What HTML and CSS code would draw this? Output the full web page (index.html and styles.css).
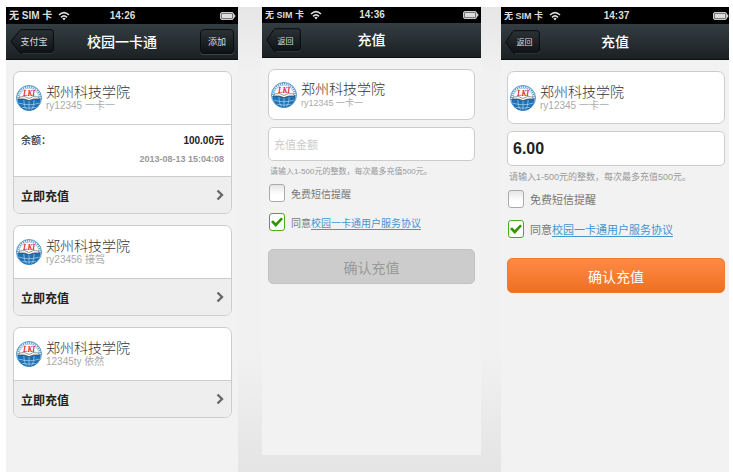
FILE: index.html
```html
<!DOCTYPE html>
<html lang="zh-CN">
<head>
<meta charset="utf-8">
<meta name="viewport" content="width=device-width, initial-scale=1">
<title>校园一卡通</title>
<link rel="stylesheet" href="styles.css">
</head>
<body>
<svg class="sprite" aria-hidden="true">
  <defs>
    <linearGradient id="key" x1="0" y1="0" x2="0" y2="1">
      <stop offset="0" stop-color="#2b3235"/>
      <stop offset="1" stop-color="#0e1214"/>
    </linearGradient>
    <symbol id="wifi" viewBox="0 0 12 10">
      <path d="M1 4Q6-.8 11 4M3 6.3Q6 3.6 9 6.3" fill="none" stroke="#ddd" stroke-width="1.6"/>
      <path d="M4.3 7.5Q6 6.2 7.7 7.5L6 9.4Z" fill="#ddd"/>
    </symbol>
    <symbol id="battery" viewBox="0 0 16 8">
      <rect x=".5" y=".5" width="13" height="7" rx="1.5" fill="#777" stroke="#ccc"/>
      <rect x="2" y="2" width="10" height="4" fill="#ddd"/>
      <path d="M14 2.5h1q1 1.5 0 3h-1z" fill="#ccc"/>
    </symbol>
    <symbol id="back" viewBox="0 0 44 25">
      <path d="M12 .7H41Q43.3.7 43.3 3V22Q43.3 24.3 41 24.3H12Q10.500 24.300 9.500 23L.8 12.500 9.500 2Q10.500.7 12 .7Z" fill="url(#key)" stroke="#080b0c" stroke-width="1"/>
      <path d="M12 24.500H41Q43.500 24.500 43.500 22" fill="none" stroke="#465056" stroke-width=".6"/>
    </symbol>
    <symbol id="back-short" viewBox="0 0 35 24">
      <path d="M10 .7H32Q34.300.7 34.300 3V21Q34.300 23.300 32 23.300H10Q8.500 23.300 7.500 22L.8 12 7.500 2Q8.500.7 10 .7Z" fill="url(#key)" stroke="#080b0c" stroke-width="1"/>
      <path d="M10 23.500H32Q34.500 23.500 34.500 21" fill="none" stroke="#465056" stroke-width=".6"/>
    </symbol>
    <symbol id="chevron" viewBox="0 0 8 12">
      <path d="M1.500 1.500L6 6 1.500 10.500" fill="none" stroke="#666" stroke-width="2.300"/>
    </symbol>
    <symbol id="crest" viewBox="0 0 50 50">
      <circle cx="25" cy="25" r="24" fill="#f4f9fd" stroke="#2c7cb9" stroke-width="1.600"/>
      <circle cx="25" cy="25" r="21.500" fill="none" stroke="#5a9bcd" stroke-width="3" stroke-dasharray="2.200 2"/>
      <circle cx="25" cy="25" r="19" fill="#fff" stroke="#5a9bcd" stroke-width="1"/>
      <path d="M3 27Q14 23 25 29 36 23 47 27A22 22 0 0 1 3 27Z" fill="#1d71b4"/>
      <path d="M25 31V48M15 29Q15 41 20 47M35 29Q35 41 30 47M6 35Q25 41 44 35M12 43Q25 46 38 43" fill="none" stroke="#b6d8ef" stroke-width="1.300"/>
      <path d="M7 23Q17 20 25 26 33 20 43 23L45 27Q33 25 25 30 17 25 5 27Z" fill="#fff" stroke="#333" stroke-width="1"/>
      <text x="25" y="21" text-anchor="middle" class="crest-letters">LKI</text>
    </symbol>
  </defs>
</svg>

<main class="board">
  <section class="phone phone-first">
    <div class="status">
      <span class="carrier">无 SIM 卡 <svg class="wifi"><use href="#wifi"/></svg></span>
      <span>14:26</span>
      <svg class="battery"><use href="#battery"/></svg>
    </div>
    <header class="nav">
      <button class="back" type="button"><svg class="key-shape"><use href="#back"/></svg><span>支付宝</span></button>
      <h1>校园一卡通</h1>
      <button class="add" type="button">添加</button>
    </header>
    <div class="body cards">
      <article class="card">
        <div class="school">
          <svg class="crest"><use href="#crest"/></svg>
          <div><h2>郑州科技学院</h2><p>ry12345 一卡一</p></div>
        </div>
        <div class="balance">
          <div class="amount"><span>余额：</span><strong>100.00元</strong></div>
          <time>2013-08-13 15:04:08</time>
        </div>
        <a class="recharge" href="#">立即充值<svg class="chevron"><use href="#chevron"/></svg></a>
      </article>
      <article class="card">
        <div class="school">
          <svg class="crest"><use href="#crest"/></svg>
          <div><h2>郑州科技学院</h2><p>ry23456 接驾</p></div>
        </div>
        <a class="recharge" href="#">立即充值<svg class="chevron"><use href="#chevron"/></svg></a>
      </article>
      <article class="card">
        <div class="school">
          <svg class="crest"><use href="#crest"/></svg>
          <div><h2>郑州科技学院</h2><p>12345ty 依然</p></div>
        </div>
        <a class="recharge" href="#">立即充值<svg class="chevron"><use href="#chevron"/></svg></a>
      </article>
    </div>
  </section>

  <section class="phone phone-small">
    <div class="status">
      <span class="carrier">无 SIM 卡 <svg class="wifi"><use href="#wifi"/></svg></span>
      <span>14:36</span>
      <svg class="battery"><use href="#battery"/></svg>
    </div>
    <header class="nav">
      <button class="back back-short" type="button"><svg class="key-shape"><use href="#back-short"/></svg><span>返回</span></button>
      <h1>充值</h1>
    </header>
    <form class="body">
      <div class="card school">
        <svg class="crest"><use href="#crest"/></svg>
        <div><h2>郑州科技学院</h2><p>ry12345 一卡一</p></div>
      </div>
      <input class="field" type="text" placeholder="充值金额" aria-label="充值金额">
      <p class="hint">请输入1-500元的整数，每次最多充值500元。</p>
      <label class="option"><input type="checkbox"><span>免费短信提醒</span></label>
      <div class="option"><input type="checkbox" id="agree-a" checked><span><label for="agree-a">同意</label><a href="#">校园一卡通用户服务协议</a></span></div>
      <button class="submit" type="button" disabled>确认充值</button>
    </form>
  </section>

  <section class="phone phone-last">
    <div class="status">
      <span class="carrier">无 SIM 卡 <svg class="wifi"><use href="#wifi"/></svg></span>
      <span>14:37</span>
      <svg class="battery"><use href="#battery"/></svg>
    </div>
    <header class="nav">
      <button class="back back-short" type="button"><svg class="key-shape"><use href="#back-short"/></svg><span>返回</span></button>
      <h1>充值</h1>
    </header>
    <form class="body">
      <div class="card school">
        <svg class="crest"><use href="#crest"/></svg>
        <div><h2>郑州科技学院</h2><p>ry12345 一卡一</p></div>
      </div>
      <input class="field" type="text" value="6.00" aria-label="充值金额">
      <p class="hint">请输入1-500元的整数，每次最多充值500元。</p>
      <label class="option"><input type="checkbox"><span>免费短信提醒</span></label>
      <div class="option"><input type="checkbox" id="agree-b" checked><span><label for="agree-b">同意</label><a href="#">校园一卡通用户服务协议</a></span></div>
      <button class="submit" type="button">确认充值</button>
    </form>
  </section>
</main>
</body>
</html>
```
FILE: styles.css
```css
* {
  box-sizing: border-box;
}

body,
h1,
h2,
p {
  margin: 0;
}

body,
button,
input {
  font-family: "Liberation Sans", "Noto Sans CJK SC", sans-serif;
}

body {
  display: flex;
  min-height: 100vh;
  padding: 7px 4px 1px 6px;
  background: #fff;
  color: #222;
}

.sprite {
  position: absolute;
  width: 0;
  height: 0;
}

.crest-letters {
  font: italic bold 14px "Liberation Serif", serif;
  fill: #d8242c;
}

.board {
  flex: 1;
  display: grid;
  grid-template-columns: 232fr 223fr 228fr;
  column-gap: 20px;
  background: linear-gradient(#e6e6e6, #f1f1f1 14%, #f1f1f1 75%, #e4e4e4);
}

.phone {
  --pad: 7px;
  --status: 17px;
  --nav: 36px;
  --head: 53px;
  --text: 11px;
  --small: 10px;
  --hint: 9px;
  min-width: 0;
  overflow: hidden;
  background: #f2f2f2;
}

.phone-small {
  --pad: 6px;
  --status: 16px;
  --nav: 35px;
  --head: 51px;
  --text: 10px;
  --small: 9px;
  --hint: 8px;
  margin: 0 0 17px 4px;
}

.phone-last {
  --pad: 6px;
}

.status {
  display: grid;
  grid-template-columns: 1fr auto 1fr;
  align-items: center;
  height: var(--status);
  padding: 0 2px 0 3px;
  background: #000;
  color: #ddd;
  font-size: 10px;
  font-weight: bold;
  line-height: 16px;
  white-space: nowrap;
}

.phone-last .status {
  padding-right: 0;
}

.carrier {
  display: flex;
  align-items: center;
  gap: 6px;
  font-size: 9px;
}

.phone-first .carrier {
  font-size: 10px;
}

.wifi {
  width: 12px;
  height: 10px;
}

.battery {
  justify-self: end;
  width: 16px;
  height: 8px;
}

.nav {
  display: grid;
  grid-template-columns: 1fr auto 1fr;
  align-items: center;
  height: var(--nav);
  padding: 0 4px;
  border-bottom: 1px solid #0c1011;
  background: linear-gradient(#333d42, #1b2123);
  color: #fff;
}

.nav h1 {
  font-size: 14px;
  font-weight: 500;
  line-height: 20px;
}

.back,
.add {
  height: 25px;
  padding: 0;
  border: 0;
  background: none;
  color: #ddd;
  font-size: 9px;
}

.back {
  position: relative;
  width: 44px;
  padding-left: 4px;
}

.back-short {
  width: 35px;
  height: 24px;
  font-size: 8px;
}

.key-shape {
  position: absolute;
  inset: 0;
  width: 100%;
  height: 100%;
}

.back span {
  position: relative;
}

.add {
  justify-self: end;
  width: 34px;
  border: 1px solid #0a0d0e;
  border-radius: 4px;
  background: linear-gradient(#2b3235, #0e1214);
  box-shadow: 0 1px 0 #3c464b;
}

.body {
  padding: 11px 6px 0 var(--pad);
}

.phone-last .body {
  padding-right: 4px;
}

.cards {
  display: grid;
  gap: 11px;
}

.card {
  overflow: hidden;
  border: 1px solid #ccc;
  border-radius: 7px;
  background: #fff;
}

.school {
  display: flex;
  align-items: center;
  gap: 4px;
  height: var(--head);
  padding: 0 2px;
}

.card .school {
  height: 52px;
}

.crest {
  flex: none;
  width: 26px;
  height: 26px;
}

.school h2 {
  color: #333;
  font-size: 14px;
  font-weight: 300;
  line-height: 16px;
}

.school p {
  color: #aaa;
  font-size: var(--small);
  line-height: 12px;
}

.balance {
  height: 52px;
  padding: 8px 7px;
  border-top: 1px solid #ccc;
  text-align: right;
}

.amount {
  display: flex;
  justify-content: space-between;
  font-size: 10px;
  line-height: 16px;
}

.amount span {
  color: #333;
  font-weight: 500;
}

.balance time {
  display: block;
  color: #999;
  font-size: 9px;
  font-weight: bold;
  line-height: 20px;
}

.recharge {
  display: flex;
  align-items: center;
  justify-content: space-between;
  height: 37px;
  padding: 0 7px;
  border-top: 1px solid #ccc;
  background: #eee;
  color: #222;
  font-size: 12px;
  font-weight: bold;
  text-decoration: none;
}

.chevron {
  width: 8px;
  height: 12px;
}

.field {
  display: block;
  width: 100%;
  height: 35px;
  margin-top: 7px;
  padding: 0 5px;
  border: 1px solid #ccc;
  border-radius: 5px;
  background: #fff;
  color: #222;
  font-size: 16px;
  font-weight: bold;
}

.field::placeholder {
  color: #ccc;
  font-size: 11px;
  font-weight: normal;
}

.hint {
  padding: 4px 2px 3px;
  color: #999;
  font-size: var(--hint);
  line-height: 14px;
  white-space: nowrap;
}

.option {
  display: flex;
  align-items: center;
  gap: 6px;
  height: 18px;
  margin: 3px 1px 0;
  color: #777;
  font-size: var(--text);
  white-space: nowrap;
}

.option + .option {
  margin-top: 12px;
}

.option a {
  color: #4595cf;
  text-underline-offset: 2px;
}

.option input {
  appearance: none;
  flex: none;
  display: grid;
  place-items: center;
  width: 16px;
  height: 18px;
  margin: 0;
  border: 1px solid #aaa;
  border-radius: 3px;
  background: linear-gradient(#e6e6e6, #fff 60%);
}

.option input:checked {
  border-color: #4caa1c;
  background: #fff;
}

.option input:checked::before {
  content: "";
  width: 12px;
  height: 11px;
  background: #319400;
  clip-path: polygon(0 50%, 17% 34%, 40% 60%, 84% 8%, 100% 22%, 40% 96%);
}

.submit {
  display: block;
  width: 100%;
  height: 35px;
  margin-top: 20px;
  padding: 0;
  border: 1px solid #ef7a30;
  border-radius: 5px;
  background: linear-gradient(#ff8a45, #ee7020);
  color: #fff;
  font-size: 14px;
}

.submit:disabled {
  border-color: #c2c2c2;
  background: #ccc;
  color: #999;
}

.phone-small .field {
  height: 34px;
}

.phone-small .hint {
  padding-bottom: 2px;
}

.phone-small .option + .option {
  margin-top: 11px;
}

.phone-small .submit {
  margin-top: 18px;
}
```
